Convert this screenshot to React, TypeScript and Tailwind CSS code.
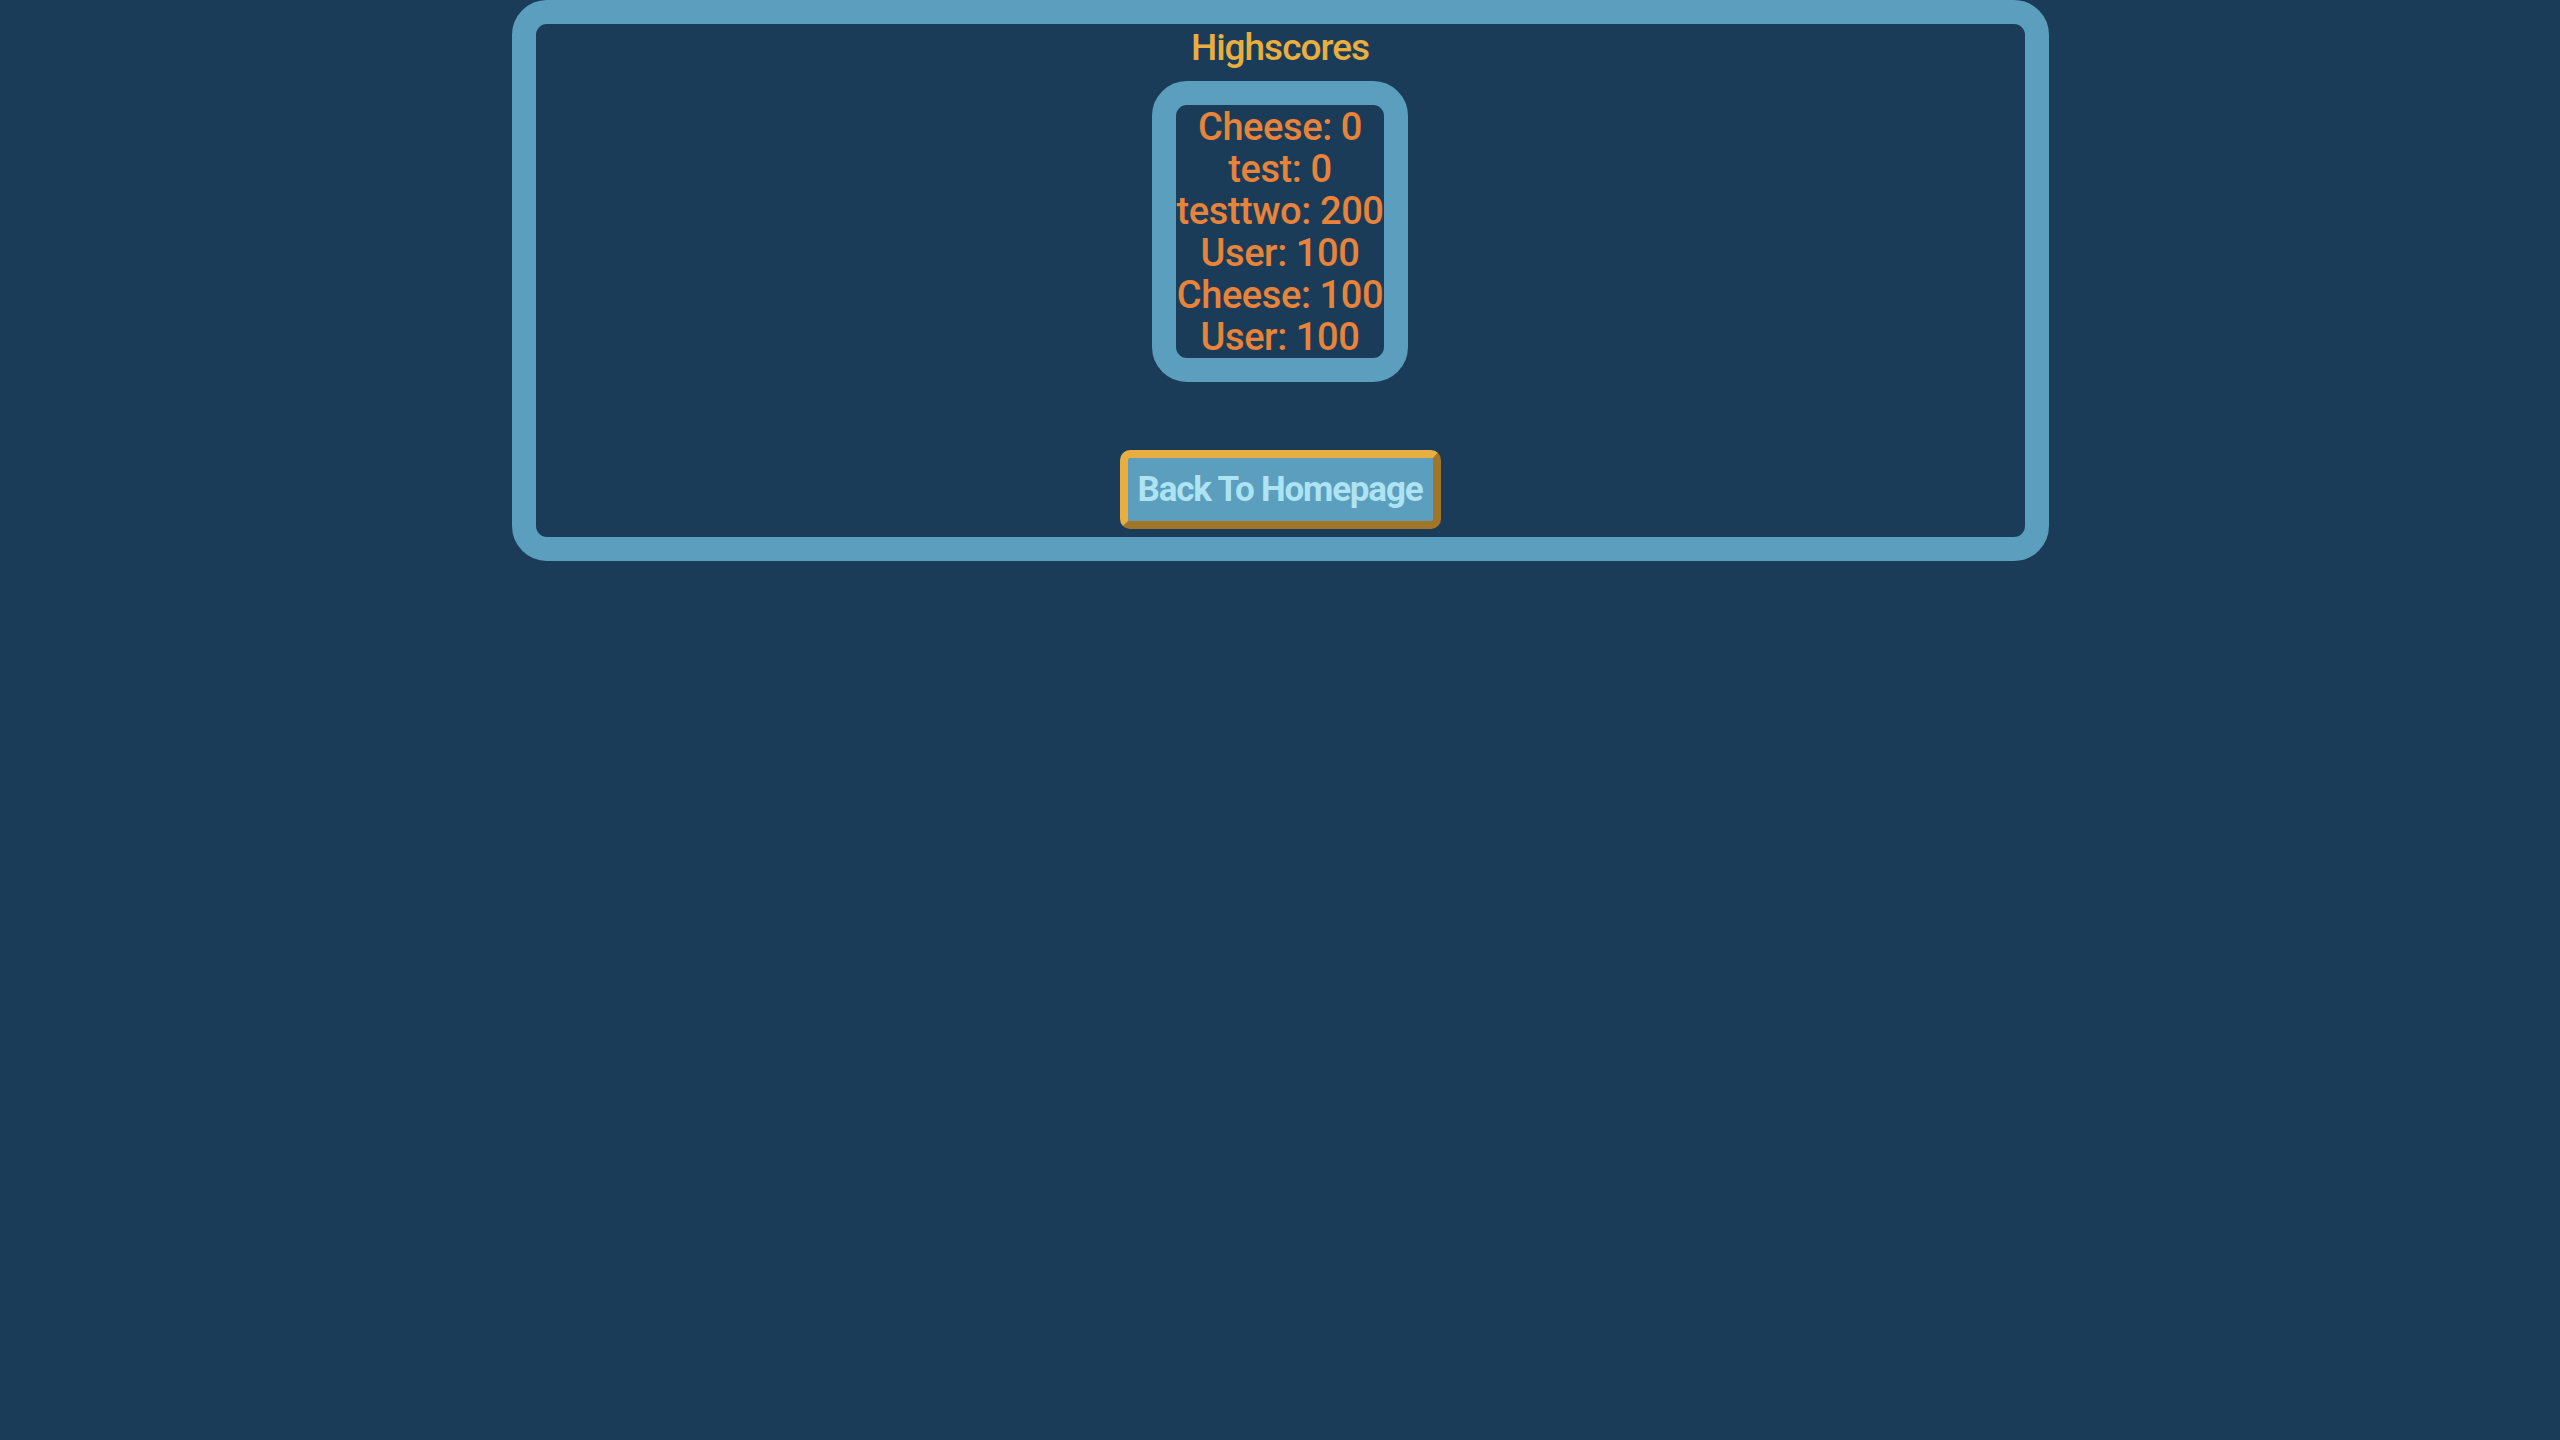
import React from "react";

const scores = [
  "Cheese: 0",
  "test: 0",
  "testtwo: 200",
  "User: 100",
  "Cheese: 100",
  "User: 100",
];

export default function App() {
  return (
    <div className="min-h-[1440px] w-full bg-[#1b3c59] [font-family:Roboto,'Liberation_Sans',sans-serif]">
      <div className="mx-auto flex w-[1537px] flex-col items-center rounded-[35px] border-[24px] border-[#5b9ebe] h-[561px]">
        <h1 className="text-[37px] leading-[48px] tracking-[-1px] mb-[9px] text-[#e9ae3f] font-medium">Highscores</h1>
        <div className="rounded-[35px] border-[24px] border-[#5b9ebe] flex flex-col items-center pt-[1px] -mb-[1px]">
          {scores.map((s, i) => (
            <div key={i} className="text-[38px] leading-[42px] tracking-[-0.4px] font-medium text-[#e8833a] whitespace-nowrap">
              {s}
            </div>
          ))}
        </div>
        <button className="mt-[69px] h-[79px] w-[321px] rounded-[10px] border-[8px] border-t-[#e9ae41] border-l-[#e9ae41] border-b-[#a17629] border-r-[#a17629] bg-[#5b9ebe] text-[35px] tracking-[-1.2px] font-bold leading-[63px] text-[#ade3f2]">
          Back To Homepage
        </button>
      </div>
    </div>
  );
}
